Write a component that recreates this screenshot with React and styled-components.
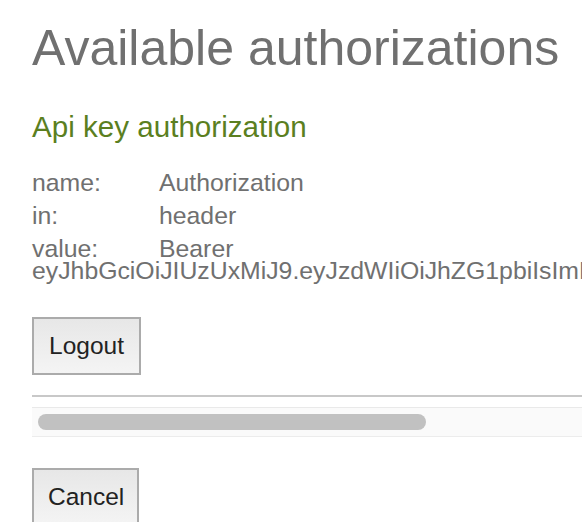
import styled, { createGlobalStyle } from "styled-components";

const GlobalStyle = createGlobalStyle`
  html, body {
    margin: 0;
    padding: 0;
    background: #fff;
    overflow: hidden;
  }
  body {
    font-family: "Liberation Sans", Arial, sans-serif;
  }
`;

const Page = styled.div`
  width: 582px;
  height: 522px;
  overflow: hidden;
  padding: 19px 0 0 32px;
  box-sizing: border-box;
`;

const Title = styled.h3`
  margin: 0;
  font-size: 50px;
  line-height: 58px;
  font-weight: 400;
  color: #707070;
  white-space: nowrap;
`;

const Scroller = styled.div`
  width: 600px;
  margin-top: 33px;
`;

const Heading = styled.h4`
  margin: 0;
  font-size: 29.6px;
  line-height: 34px;
  font-weight: 400;
  color: #5b7f1f;
  white-space: nowrap;
`;

const Rows = styled.div`
  display: flex;
  flex-direction: column;
  gap: 11px;
  margin-top: 28px;
`;

const Row = styled.div`
  font-size: 24.8px;
  line-height: 22px;
  color: #707070;
  width: 550px;
`;

const Label = styled.span`
  display: inline-block;
  width: 127px;
`;

const Button = styled.button`
  display: block;
  box-sizing: border-box;
  height: 58px;
  padding: 0 14px;
  border: 2px solid #ababab;
  border-radius: 0;
  background: linear-gradient(#e7e7e7, #f4f4f4);
  font-family: "Liberation Sans", Arial, sans-serif;
  font-size: 24.5px;
  color: #222;
  cursor: pointer;
`;

const LogoutButton = styled(Button)`
  width: 109px;
  margin-top: 35px;
`;

const CancelButton = styled(Button)`
  width: 107px;
  margin-top: 31px;
`;

const Rule = styled.div`
  height: 2px;
  background: #c8c8c8;
  margin-top: 20px;
`;

const Track = styled.div`
  display: flex;
  align-items: center;
  box-sizing: border-box;
  height: 30px;
  margin-top: 10px;
  padding-left: 6px;
  background: #fafafa;
  border-top: 1px solid #e9e9e9;
  border-bottom: 1px solid #ececec;
`;

const Thumb = styled.div`
  width: 388px;
  height: 16px;
  border-radius: 8px;
  background: #c1c1c1;
`;

const rows = [
  { label: "name:", value: "Authorization" },
  { label: "in:", value: "header" },
  {
    label: "value:",
    value:
      "Bearer eyJhbGciOiJIUzUxMiJ9.eyJzdWIiOiJhZG1pbiIsImNyZWF0ZWQiOjE1OTk5OTk5OTk5OTksImV4cCI6MTYwMDYwNDc5OX0",
  },
];

export default function App() {
  return (
    <>
      <GlobalStyle />
      <Page>
        <Title>Available authorizations</Title>
        <Scroller>
          <Heading>Api key authorization</Heading>
          <Rows>
            {rows.map((row) => (
              <Row key={row.label}>
                <Label>{row.label}</Label>
                {row.value}
              </Row>
            ))}
          </Rows>
          <LogoutButton type="button">Logout</LogoutButton>
          <Rule />
          <Track>
            <Thumb />
          </Track>
        </Scroller>
        <CancelButton type="button">Cancel</CancelButton>
      </Page>
    </>
  );
}
